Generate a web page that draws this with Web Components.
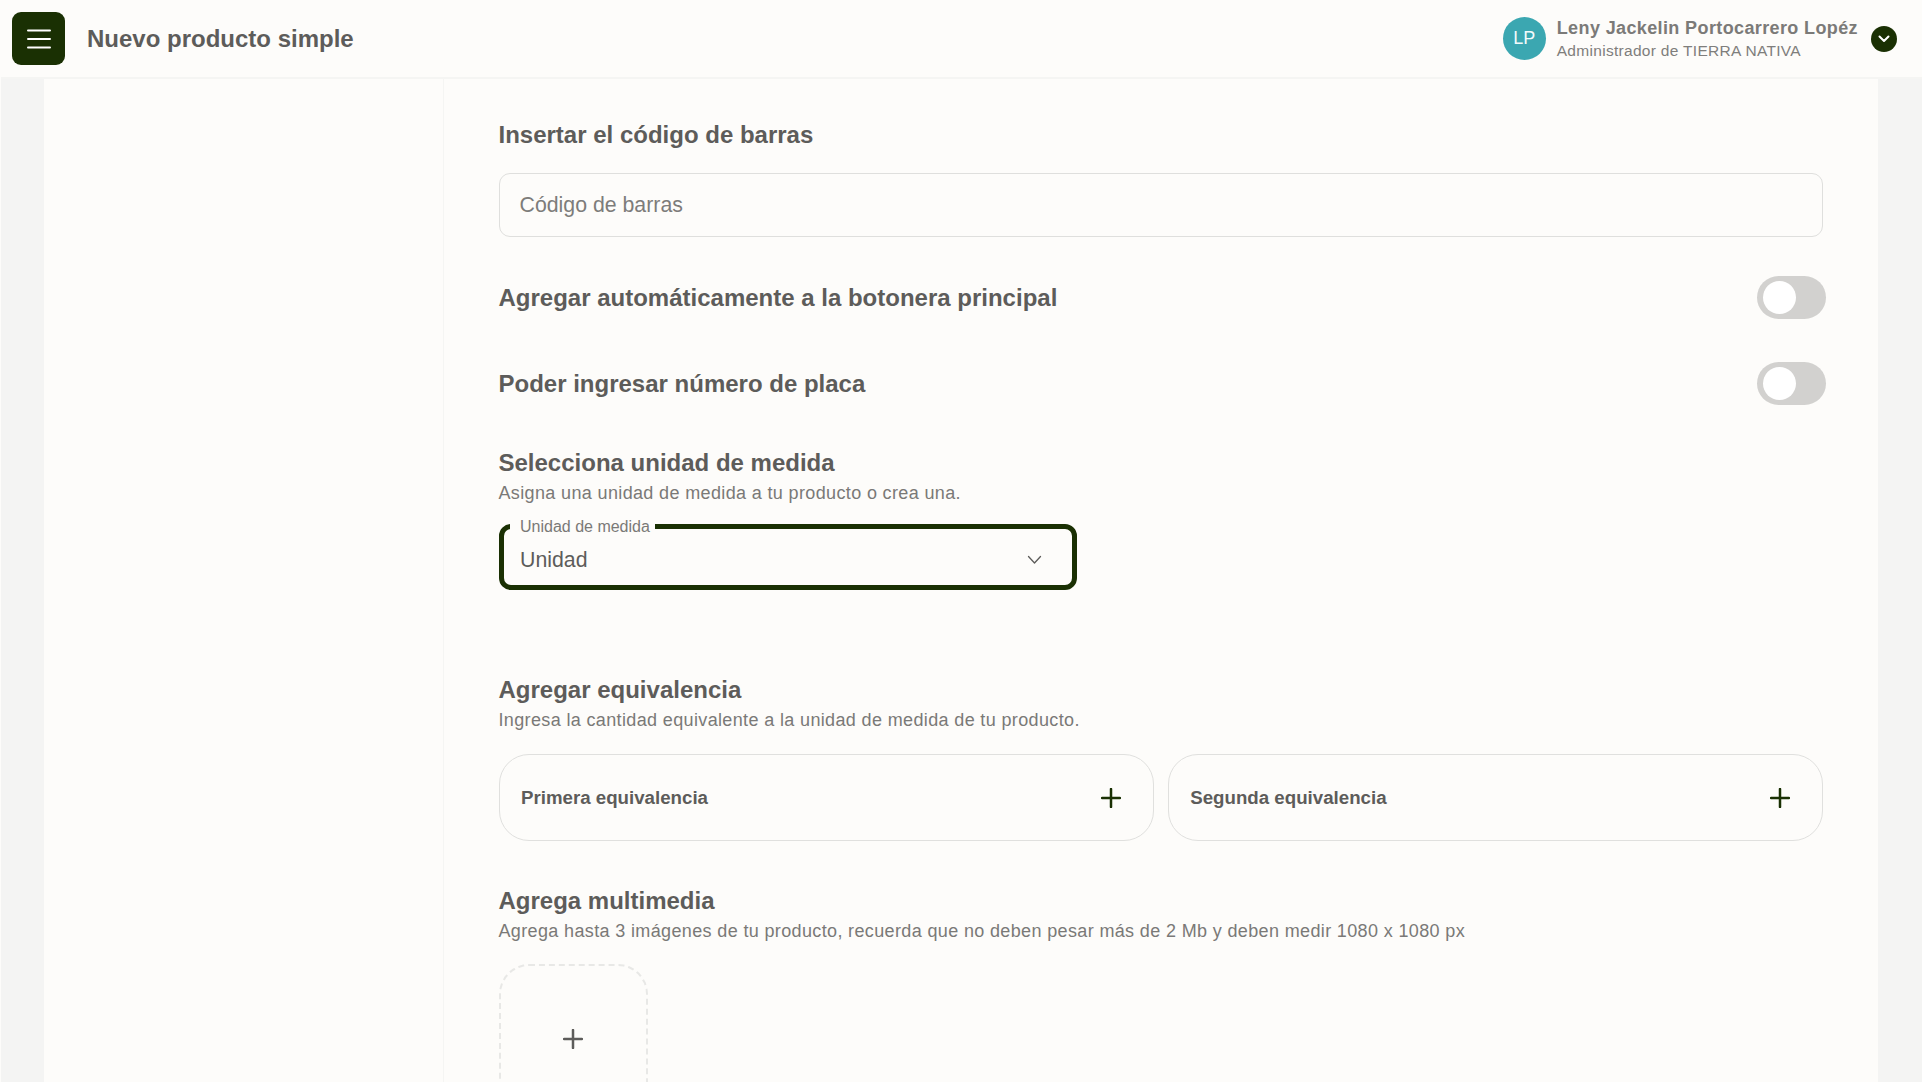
<!DOCTYPE html>
<html lang="es">
<head>
<meta charset="utf-8">
<title>Nuevo producto simple</title>
<style>
  html, body { margin: 0; height: 100%; overflow: hidden; background: #f4f4f3; }
  body { font-family: "Liberation Sans", Arial, sans-serif; color: #5d5c5a; border-left: 1px solid #fdfcfa; }
</style>
</head>
<body>
<app-header title="Nuevo producto simple" name="Leny Jackelin Portocarrero Lopéz" role="Administrador de TIERRA NATIVA" initials="LP"></app-header>
<page-shell>
  <form-section heading="Insertar el código de barras">
    <text-field placeholder="Código de barras"></text-field>
  </form-section>
  <toggle-row class="first" label="Agregar automáticamente a la botonera principal"></toggle-row>
  <toggle-row label="Poder ingresar número de placa"></toggle-row>
  <titled-block class="unit" heading="Selecciona unidad de medida" hint="Asigna una unidad de medida a tu producto o crea una.">
    <select-field label="Unidad de medida" value="Unidad"></select-field>
  </titled-block>
  <titled-block class="equiv" heading="Agregar equivalencia" hint="Ingresa la cantidad equivalente a la unidad de medida de tu producto.">
    <div style="display:grid;grid-template-columns:1fr 1fr;gap:14px">
      <add-card label="Primera equivalencia"></add-card>
      <add-card label="Segunda equivalencia"></add-card>
    </div>
  </titled-block>
  <titled-block class="media" heading="Agrega multimedia" hint="Agrega hasta 3 imágenes de tu producto, recuerda que no deben pesar más de 2 Mb y deben medir 1080 x 1080 px">
    <upload-tile></upload-tile>
  </titled-block>
</page-shell>
<script>
class AppHeader extends HTMLElement {
  connectedCallback() {
    this.attachShadow({ mode: 'open' });
    this.shadowRoot.innerHTML = `
      <style>
        :host { display: flex; align-items: center; justify-content: space-between; height: 79px; box-sizing: border-box; background: #fdfcfa; border-bottom: 2px solid #f5f5f3; padding: 0 25px 0 11px; }
        .left, .right { display: flex; align-items: center; }
        .menu { width: 53px; height: 53px; border-radius: 9px; background: #1a3003; display: flex; align-items: center; justify-content: center; }
        h1 { margin: 0 0 0 22px; font-size: 24px; font-weight: 700; color: #5d5c5a; }
        .avatar { width: 43px; height: 43px; border-radius: 50%; background: #3ba7b1; color: #f2fafb; font-size: 18px; display: flex; align-items: center; justify-content: center; margin-right: 11px; }
        .name { font-size: 18px; font-weight: 700; color: #7b7a78; line-height: 24px; letter-spacing: .38px; }
        .role { font-size: 15.5px; color: #7f7e7c; line-height: 22px; letter-spacing: .3px; }
        .chev { width: 26px; height: 26px; border-radius: 50%; background: #1a3003; margin-left: 13px; display: flex; align-items: center; justify-content: center; }
      </style>
      <div class="left">
        <div class="menu"><svg width="24" height="20" viewBox="0 0 24 20" fill="none" stroke="#fff" stroke-width="2" stroke-linecap="round"><path d="M1 1.500h22M1 10h22M1 18.500h22"/></svg></div>
        <h1>${this.getAttribute('title')}</h1>
      </div>
      <div class="right">
        <div class="avatar">${this.getAttribute('initials')}</div>
        <div><div class="name">${this.getAttribute('name')}</div><div class="role">${this.getAttribute('role')}</div></div>
        <div class="chev"><svg width="12" height="8" viewBox="0 0 12 8" fill="none" stroke="#fff" stroke-width="2" stroke-linecap="round" stroke-linejoin="round"><path d="M1.500 1.500L6 6l4.500-4.500"/></svg></div>
      </div>`;
  }
}
class PageShell extends HTMLElement {
  connectedCallback() {
    this.attachShadow({ mode: 'open' });
    this.shadowRoot.innerHTML = `
      <style>
        :host { display: grid; grid-template-columns: 400px 1fr; margin: 0 44px 0 43px; height: 1003px; background: #fdfcfa; overflow: hidden; }
        aside { border-right: 1.500px solid #f5f5f3; }
        main { padding: 0 55px 0 54.500px; }
      </style>
      <aside></aside>
      <main><slot></slot></main>`;
  }
}
class FormSection extends HTMLElement {
  connectedCallback() {
    this.attachShadow({ mode: 'open' });
    this.shadowRoot.innerHTML = `
      <style>
        :host { display: block; padding-top: 41px; }
        h2 { margin: 0 0 23px; font-size: 24px; line-height: 30px; font-weight: 700; color: #5d5c5a; }
      </style>
      <h2>${this.getAttribute('heading')}</h2>
      <slot></slot>`;
  }
}
class TextField extends HTMLElement {
  connectedCallback() {
    this.attachShadow({ mode: 'open' });
    this.shadowRoot.innerHTML = `
      <style>
        :host { display: flex; align-items: center; height: 64px; box-sizing: border-box; border: 1.500px solid #dfdfdd; border-radius: 11px; padding: 0 20px; font-size: 21.3px; color: #7d7c7a; }
      </style>
      ${this.getAttribute('placeholder')}`;
  }
}
class ToggleRow extends HTMLElement {
  connectedCallback() {
    this.attachShadow({ mode: 'open' });
    this.shadowRoot.innerHTML = `
      <style>
        :host { display: flex; align-items: center; justify-content: space-between; height: 43px; margin: 43px -3px 0 0; font-size: 24px; font-weight: 700; color: #5d5c5a; }
        :host(.first) { margin-top: 39px; }
        .sw { width: 69px; height: 43px; border-radius: 22px; background: #d2d1cf; box-sizing: border-box; padding: 5px 6px; }
        .knob { width: 33px; height: 33px; border-radius: 50%; background: #fff; }
      </style>
      <span>${this.getAttribute('label')}</span>
      <div class="sw"><div class="knob"></div></div>`;
  }
}
class TitledBlock extends HTMLElement {
  connectedCallback() {
    this.attachShadow({ mode: 'open' });
    this.shadowRoot.innerHTML = `
      <style>
        :host { display: block; }
        :host(.unit) { margin-top: 43px; --gap: 16px; }
        :host(.equiv) { margin-top: 85px; --gap: 19px; }
        :host(.media) { margin-top: 45px; --gap: 18px; }
        h2 { margin: 0; font-size: 24px; line-height: 30px; font-weight: 700; color: #5d5c5a; }
        p { margin: 0 0 var(--gap); font-size: 18px; line-height: 30px; color: #7a7977; letter-spacing: .36px; }
      </style>
      <h2>${this.getAttribute('heading')}</h2>
      <p>${this.getAttribute('hint')}</p>
      <slot></slot>`;
  }
}
class SelectField extends HTMLElement {
  connectedCallback() {
    this.attachShadow({ mode: 'open' });
    this.shadowRoot.innerHTML = `
      <style>
        :host { display: flex; align-items: center; justify-content: space-between; position: relative; width: 578px; height: 66px; box-sizing: border-box; border: 5px solid #1a3003; border-radius: 12px; padding: 6px 30px 0 16.500px; font-size: 21.3px; color: #5d5c5a; }
        label { position: absolute; left: 6.500px; top: -11px; background: #fdfcfa; padding: 0 5px 0 10px; font-size: 16px; line-height: 18px; color: #7a7977; }
      </style>
      <label>${this.getAttribute('label')}</label>
      <span>${this.getAttribute('value')}</span>
      <svg width="15" height="10" viewBox="0 0 15 10" fill="none" stroke="#5d5c5a" stroke-width="1.300" stroke-linecap="round" stroke-linejoin="round"><path d="M1.500 1.500L7.500 8l6-6.500"/></svg>`;
  }
}
class AddCard extends HTMLElement {
  connectedCallback() {
    this.attachShadow({ mode: 'open' });
    this.shadowRoot.innerHTML = `
      <style>
        :host { display: flex; align-items: center; justify-content: space-between; height: 87px; box-sizing: border-box; border: 1.500px solid #e0e0de; border-radius: 30px; padding: 0 32px 0 21.500px; font-size: 18.7px; font-weight: 700; color: #5d5c5a; }
      </style>
      <span>${this.getAttribute('label')}</span>
      <svg width="20" height="20" viewBox="0 0 20 20" stroke="#1a3003" stroke-width="2.500" stroke-linecap="round"><path d="M10 1v18M1 10h18"/></svg>`;
  }
}
class UploadTile extends HTMLElement {
  connectedCallback() {
    this.attachShadow({ mode: 'open' });
    this.shadowRoot.innerHTML = `
      <style>
        :host { display: flex; align-items: center; justify-content: center; width: 149px; height: 149px; box-sizing: border-box; border: 2px dashed #e8e8e6; border-radius: 30px; }
      </style>
      <svg width="20" height="20" viewBox="0 0 20 20" stroke="#5d5c5a" stroke-width="2.500" stroke-linecap="round" style="margin-left:-1px"><path d="M10 1v18M1 10h18"/></svg>`;
  }
}
customElements.define('app-header', AppHeader);
customElements.define('page-shell', PageShell);
customElements.define('form-section', FormSection);
customElements.define('text-field', TextField);
customElements.define('toggle-row', ToggleRow);
customElements.define('titled-block', TitledBlock);
customElements.define('select-field', SelectField);
customElements.define('add-card', AddCard);
customElements.define('upload-tile', UploadTile);
</script>
</body>
</html>
